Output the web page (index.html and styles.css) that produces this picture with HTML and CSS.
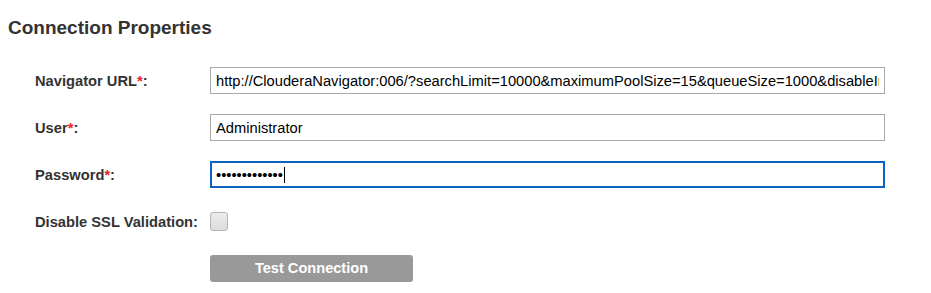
FILE: index.html
```html
<!DOCTYPE html>
<html lang="en">
<head>
  <meta charset="UTF-8">
  <meta name="viewport" content="width=device-width, initial-scale=1.0">
  <title>Connection Properties</title>
  <link rel="stylesheet" href="styles.css">
</head>
<body>
  <h2 class="title">Connection Properties</h2>

  <form class="props">
    <label class="lbl" for="navUrl">Navigator URL<span class="req">*</span>:</label>
    <input type="text" id="navUrl" class="field" value="http://ClouderaNavigator:006/?searchLimit=10000&amp;maximumPoolSize=15&amp;queueSize=1000&amp;disableIntegrationTimeout=true">

    <label class="lbl" for="user">User<span class="req">*</span>:</label>
    <input type="text" id="user" class="field" value="Administrator">

    <label class="lbl" for="password">Password<span class="req">*</span>:</label>
    <div class="pwWrap">
      <input type="password" id="password" class="field focused" value="administrator">
      <span class="caret"></span>
    </div>

    <label class="lbl" for="ssl">Disable SSL Validation:</label>
    <div class="checkRow">
      <input type="checkbox" id="ssl" class="check">
    </div>

    <span></span>
    <div class="btnRow">
      <button type="button" class="testBtn">Test Connection</button>
    </div>
  </form>
</body>
</html>
```

FILE: styles.css
```css
body {
  margin: 8px;
  font-family: "Liberation Sans", Arial, sans-serif;
  color: #333;
  background: #fff;
}

.title {
  margin: 9px 0 28px 0;
  font-size: 19px;
  line-height: 22px;
  font-weight: bold;
  color: #333;
}

.props {
  display: grid;
  grid-template-columns: 175px 675px;
  grid-auto-rows: 27px;
  row-gap: 20px;
  align-items: center;
  padding-left: 27px;
}

.lbl {
  font-size: 14.7px;
  font-weight: bold;
  color: #333;
}
.req {
  color: #e8202a;
}

.field {
  box-sizing: border-box;
  width: 100%;
  height: 27px;
  margin: 0;
  padding: 0 5px;
  border: 1px solid #aaa;
  border-radius: 0;
  outline: none;
  font-family: "Liberation Sans", Arial, sans-serif;
  font-size: 14.7px;
  color: #000;
  background: #fff;
}
.field.focused {
  border: 2px solid #0b64c4;
  padding: 0 4px;
}

.pwWrap {
  position: relative;
  height: 27px;
}
.caret {
  position: absolute;
  left: 74px;
  top: 6px;
  width: 1px;
  height: 16px;
  background: #000;
}

.checkRow {
  display: flex;
  align-items: center;
}
.check {
  appearance: none;
  -webkit-appearance: none;
  box-sizing: border-box;
  width: 18px;
  height: 19px;
  margin: 0;
  border: 1px solid #b5b5b5;
  border-radius: 3px;
  background: linear-gradient(#ececec, #dcdcdc);
}

.btnRow {
  display: flex;
  margin-top: -1px;
}
.testBtn {
  width: 203px;
  height: 27px;
  border: none;
  border-radius: 3px;
  background: #999;
  color: #fff;
  font-family: "Liberation Sans", Arial, sans-serif;
  font-size: 14.6px;
  font-weight: bold;
}
```
